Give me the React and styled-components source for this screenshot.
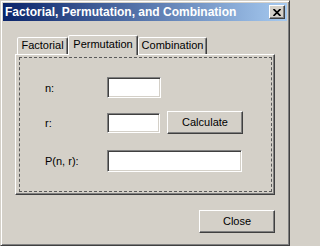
import React from "react";
import styled, { createGlobalStyle } from "styled-components";

const GlobalStyle = createGlobalStyle`
  html, body {
    margin: 0;
    padding: 0;
    background: #d4d0c8;
  }
  * {
    box-sizing: border-box;
  }
`;

const Window = styled.div`
  width: 290px;
  height: 246px;
  background: #d4d0c8;
  border: 1px solid;
  border-color: #d4d0c8 #404040 #404040 #d4d0c8;
  box-shadow: inset 1px 1px #fff, inset -1px -1px #808080;
  padding: 2px;
  font-family: "Liberation Sans", Arial, sans-serif;
  font-size: 11px;
  color: #000;
  display: flex;
  flex-direction: column;
`;

const TitleBar = styled.div`
  height: 18px;
  display: flex;
  align-items: center;
  background: linear-gradient(to right, #0a246a, #a6caf0);
  padding-left: 2px;
`;

const TitleText = styled.div`
  flex: 1;
  color: #fff;
  font-weight: 700;
  font-size: 12px;
  white-space: nowrap;
`;

const TitleButton = styled.button`
  width: 16px;
  height: 14px;
  margin-right: 2px;
  padding: 0;
  display: flex;
  align-items: center;
  justify-content: center;
  background: #d4d0c8;
  border: 1px solid;
  border-color: #fff #404040 #404040 #fff;
  box-shadow: inset -1px -1px #808080;
`;

const Body = styled.div`
  flex: 1;
  padding: 13px 12px 0 12px;
  display: flex;
  flex-direction: column;
`;

const TabList = styled.div`
  display: flex;
  align-items: flex-end;
  padding-left: 2px;
  height: 20px;
  position: relative;
  z-index: 1;
`;

const Tab = styled.div`
  width: ${(p) => p.$width}px;
  height: ${(p) => (p.$active ? 20 : 17)}px;
  margin-bottom: ${(p) => (p.$active ? -1 : 0)}px;
  background: #d4d0c8;
  border: 1px solid;
  border-bottom: none;
  border-color: #fff #404040 transparent #fff;
  box-shadow: inset -1px 0 #808080;
  border-radius: 2px 2px 0 0;
  display: flex;
  justify-content: center;
  padding-top: ${(p) => (p.$active ? 2 : 1)}px;
  white-space: nowrap;
`;

const Panel = styled.div`
  height: 141px;
  border: 1px solid;
  border-color: #fff #404040 #404040 #fff;
  box-shadow: inset -1px -1px #808080;
  padding: 2px 2px 2px 3px;
`;

const FocusFrame = styled.div`
  height: 100%;
  border: 1px dashed #5a5a5a;
  padding: 19px 0 0 25px;
  display: flex;
  flex-direction: column;
`;

const Row = styled.div`
  display: flex;
  align-items: center;
  height: ${(p) => p.$height}px;
  margin-top: ${(p) => p.$top || 0}px;
`;

const Label = styled.div`
  width: 62px;
`;

const Field = styled.div`
  width: ${(p) => p.$width}px;
  height: ${(p) => p.$height}px;
  background: #fff;
  border: 1px solid;
  border-color: #808080 #fff #fff #808080;
  box-shadow: inset 1px 1px #404040, inset -1px -1px #d4d0c8;
`;

const Button = styled.button`
  width: 76px;
  height: 23px;
  margin-left: ${(p) => p.$left || 0}px;
  background: #d4d0c8;
  border: 1px solid;
  border-color: #fff #404040 #404040 #fff;
  box-shadow: inset -1px -1px #808080;
  font-family: "Liberation Sans", Arial, sans-serif;
  font-size: 11px;
  color: #000;
  padding: 0 0 1px 0;
`;

const Footer = styled.div`
  display: flex;
  justify-content: flex-end;
  padding-top: 15px;
`;

const CloseGlyph = () => (
  <svg width="8" height="7" viewBox="0 0 8 7">
    <path d="M0.5 0 L7.5 7 M7.5 0 L0.5 7" stroke="#000" strokeWidth="1.7" />
  </svg>
);

export default function App() {
  return (
    <>
      <GlobalStyle />
      <Window>
        <TitleBar>
          <TitleText>Factorial, Permutation, and Combination</TitleText>
          <TitleButton>
            <CloseGlyph />
          </TitleButton>
        </TitleBar>
        <Body>
          <TabList>
            <Tab $width={51}>Factorial</Tab>
            <Tab $width={70} $active>
              Permutation
            </Tab>
            <Tab $width={69}>Combination</Tab>
          </TabList>
          <Panel>
            <FocusFrame>
              <Row $height={21}>
                <Label>n:</Label>
                <Field $width={54} $height={21} />
              </Row>
              <Row $height={23} $top={13}>
                <Label>r:</Label>
                <Field $width={53} $height={20} />
                <Button $left={7}>Calculate</Button>
              </Row>
              <Row $height={22} $top={16}>
                <Label>P(n, r):</Label>
                <Field $width={135} $height={22} />
              </Row>
            </FocusFrame>
          </Panel>
          <Footer>
            <Button>Close</Button>
          </Footer>
        </Body>
      </Window>
    </>
  );
}
